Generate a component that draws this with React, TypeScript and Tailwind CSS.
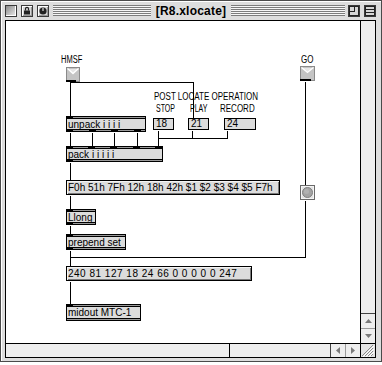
import React from "react";

type Obj = { x: number; y: number; w: number; h: number; t: string; ins: number[]; outs: number[] };

const OX = 6;
const OY = 21;

const objects: Obj[] = [
  { x: 66, y: 116, w: 80, h: 16, t: "unpack i i i i", ins: [0], outs: [0, 23, 45, 68] },
  { x: 66, y: 146, w: 97, h: 16, t: "pack i i i i i", ins: [0, 22, 44, 67, 89], outs: [0] },
  { x: 66, y: 209, w: 30, h: 16, t: "Llong", ins: [0], outs: [0] },
  { x: 66, y: 234, w: 60, h: 16, t: "prepend set", ins: [0], outs: [0] },
  { x: 66, y: 304, w: 75, h: 17, t: "midout MTC-1", ins: [0], outs: [] },
];

const numbers = [
  { x: 153, y: 118, w: 21, h: 12, t: "18" },
  { x: 188, y: 118, w: 21, h: 12, t: "21" },
  { x: 224, y: 118, w: 32, h: 12, t: "24" },
];

// cords in page coordinates: [x1,y1,x2,y2]
const cords: [number, number, number, number][] = [
  [70, 81, 70, 116],
  [70, 132, 70, 146],
  [70, 162, 70, 180],
  [70, 195, 70, 209],
  [70, 225, 70, 234],
  [70, 250, 70, 266],
  [70, 281, 70, 304],
  [70, 82, 193, 82],
  [193, 82, 193, 118],
  [92, 132, 92, 146],
  [114, 132, 114, 146],
  [137, 132, 137, 146],
  [158, 130, 158, 146],
  [192, 130, 192, 138],
  [227, 130, 227, 138],
  [158, 138, 227, 138],
  [305, 81, 305, 185],
  [305, 200, 305, 257],
  [70, 257, 305, 257],
];

function ObjBox({ o }: { o: Obj }) {
  return (
    <div
      className="absolute border border-black bg-[#dcdcdc] flex flex-col"
      style={{ left: o.x - OX, top: o.y - OY, width: o.w, height: o.h }}
    >
      <div className="relative h-[1px] shrink-0 bg-[#9a9a9a]">
        {o.ins.map((p, i) => (
          <div key={i} className="absolute top-0 h-[1px] w-[7px] bg-black" style={{ left: p - 1 }} />
        ))}
      </div>
      <div className="h-[1px] shrink-0 bg-black" />
      <div className="flex-1 min-h-0 flex items-center pl-[1px] text-[10px] leading-[11px] whitespace-nowrap overflow-hidden">
        {o.t}
      </div>
      <div className="h-[1px] shrink-0 bg-black" />
      <div className="relative h-[1px] shrink-0 bg-[#9a9a9a]">
        {o.outs.map((p, i) => (
          <div key={i} className="absolute top-0 h-[1px] w-[7px] bg-black" style={{ left: p - 1 }} />
        ))}
      </div>
    </div>
  );
}

function EnvButton({ x, y, w, h }: { x: number; y: number; w: number; h: number }) {
  return (
    <svg className="absolute" style={{ left: x - OX, top: y - OY }} width={w} height={h} shapeRendering="crispEdges">
      <rect x={0.5} y={0.5} width={w - 1} height={h - 1} fill="#c4c4c4" stroke="#8a8a8a" />
      <polygon points={`1.5,1.5 ${w / 2},${h / 2 - 1} ${w - 1.5},1.5`} fill="#e6e6e6" stroke="none" />
      <polyline
        points={`1.5,1.5 ${w / 2},${h / 2 - 1} ${w - 1.5},1.5`}
        fill="none"
        stroke="#ffffff"
        strokeWidth={1.3}
        shapeRendering="auto"
      />
      <rect x={0} y={h - 2} width={w - 4} height={2} fill="#000" />
    </svg>
  );
}

function BangButton({ x, y }: { x: number; y: number }) {
  return (
    <svg className="absolute" style={{ left: x - OX, top: y - OY }} width={15} height={15}>
      <rect x={0.5} y={0.5} width={14} height={14} fill="#e2e2e2" stroke="#6a6a6a" shapeRendering="crispEdges" />
      <rect x={1.5} y={1.5} width={12} height={12} fill="none" stroke="#f4f4f4" shapeRendering="crispEdges" />
      <circle cx={7.5} cy={7.5} r={5} fill="#a3a3a3" stroke="#808080" />
      <circle cx={6.5} cy={6.5} r={2.5} fill="#b2b2b2" />
    </svg>
  );
}

function Label({ x, y, t, s }: { x: number; y: number; t: string; s: string }) {
  return (
    <div
      className={`absolute text-[10px] leading-[11px] whitespace-nowrap origin-left ${s}`}
      style={{ left: x - OX, top: y - OY }}
    >
      {t}
    </div>
  );
}

function Stripes({ w }: { w: string }) {
  return (
    <div
      className={`${w} h-[11px] shrink-0 bg-[repeating-linear-gradient(to_bottom,#7c7c7c_0px,#7c7c7c_1px,#f6f6f6_1px,#f6f6f6_2px)]`}
    />
  );
}

function WinBox({ children, ml }: { children?: React.ReactNode; ml: string }) {
  return (
    <div className={`${ml} w-[12px] h-[12px] shrink-0 border border-[#3a3a3a] bg-[#d6d6d6] shadow-[inset_1px_1px_0_#ffffff,inset_-1px_-1px_0_#9a9a9a] flex items-center justify-center`}>
      {children}
    </div>
  );
}

export default function App() {
  return (
    <div className="w-[382px] h-[365px] bg-white font-['Liberation_Sans',Arial,sans-serif] text-black">
      <div className="w-[382px] h-[362px] border border-[#4a4a4a] bg-[#dddddd] flex flex-col shadow-[inset_1px_1px_0_#ffffff]">
        {/* title bar */}
        <div className="h-[19px] shrink-0 flex items-center">
          <div className="ml-[4px] w-[12px] h-[12px] shrink-0 border border-[#3a3a3a] bg-linear-to-br from-[#8a8a8a] to-[#f0f0f0] shadow-[inset_-1px_-1px_0_#ffffff]" />
          <WinBox ml="ml-[4px]">
            <svg width={8} height={9}>
              <path d="M2.5 4.5 V2.8 a1.5 1.5 0 0 1 3 0 V4.5" fill="none" stroke="#222" strokeWidth={1.2} />
              <rect x={1} y={4.5} width={6} height={4} fill="#222" />
            </svg>
          </WinBox>
          <WinBox ml="ml-[4px]">
            <svg width={8} height={8}>
              <circle cx={4} cy={4} r={3.6} fill="#222" />
              <rect x={3.5} y={1} width={1} height={3} fill="#fff" />
            </svg>
          </WinBox>
          <div className="ml-[4px]" />
          <Stripes w="w-[98px]" />
          <div className="w-[80px] shrink-0 text-center font-bold text-[12px] leading-[14px] tracking-[0.2px]">[R8.xlocate]</div>
          <Stripes w="w-[114px]" />
          <WinBox ml="ml-[3px]">
            <svg width={10} height={10} shapeRendering="crispEdges">
              <rect x={0.5} y={0.5} width={9} height={9} fill="none" stroke="#222" />
              <rect x={0.5} y={0.5} width={5} height={5} fill="none" stroke="#222" />
            </svg>
          </WinBox>
          <WinBox ml="ml-[4px]">
            <svg width={10} height={10} shapeRendering="crispEdges">
              <rect x={0.5} y={0.5} width={9} height={9} fill="none" stroke="#222" />
              <line x1={0} y1={3.5} x2={10} y2={3.5} stroke="#222" />
              <line x1={0} y1={6.5} x2={10} y2={6.5} stroke="#222" />
            </svg>
          </WinBox>
        </div>

        {/* content */}
        <div className="ml-[4px] mr-[5px] mb-[3px] flex-1 border border-black flex flex-col bg-white">
          <div className="flex h-[322px]">
            <div className="relative w-[354px] h-[322px] overflow-hidden bg-white">
              <svg className="absolute left-0 top-0" width={354} height={322} viewBox="6 21 354 322" shapeRendering="crispEdges">
                {cords.map(([x1, y1, x2, y2], i) => (
                  <line key={i} x1={x1 + 0.5} y1={y1 + 0.5} x2={x2 + 0.5} y2={y2 + 0.5} stroke="#000" strokeWidth={1} />
                ))}
              </svg>

              <Label x={61} y={54} t="HMSF" s="scale-x-[0.75]" />
              <Label x={301} y={54} t="GO" s="scale-x-[0.8]" />
              <Label x={154} y={91} t="POST LOCATE OPERATION" s="scale-x-[0.8]" />
              <Label x={156} y={103} t="STOP" s="scale-x-[0.7]" />
              <Label x={190} y={103} t="PLAY" s="scale-x-[0.7]" />
              <Label x={220} y={103} t="RECORD" s="scale-x-[0.8]" />

              <EnvButton x={66} y={67} w={14} h={15} />
              <EnvButton x={300} y={66} w={15} h={15} />
              <BangButton x={300} y={185} />

              {numbers.map((n, i) => (
                <div
                  key={i}
                  className="absolute border border-black bg-[#dcdcdc] pl-[2px] text-[10px] leading-[10px] whitespace-nowrap overflow-hidden"
                  style={{ left: n.x - OX, top: n.y - OY, width: n.w, height: n.h }}
                >
                  {n.t}
                </div>
              ))}

              {objects.map((o, i) => (
                <ObjBox key={i} o={o} />
              ))}

              <div
                className="absolute border border-black bg-[#dcdcdc] shadow-[inset_1px_1px_0_#f4f4f4,inset_-1px_-1px_0_#7a7a7a] flex items-center pl-[1px] text-[10px] leading-[11px] whitespace-nowrap overflow-hidden"
                style={{ left: 66 - OX, top: 180 - OY, width: 214, height: 15 }}
              >
                F0h 51h 7Fh 12h 18h 42h $1 $2 $3 $4 $5 F7h
              </div>
              <div
                className="absolute border border-black bg-[#dcdcdc] shadow-[inset_1px_1px_0_#f4f4f4,inset_-1px_-1px_0_#7a7a7a] flex items-center pl-[1px] text-[10px] leading-[11px] tracking-[0.5px] whitespace-nowrap overflow-hidden"
                style={{ left: 66 - OX, top: 266 - OY, width: 186, height: 15 }}
              >
                240 81 127 18 24 66 0 0 0 0 0 247
              </div>
            </div>

            {/* vertical scrollbar */}
            <div className="w-[15px] border-l border-black flex flex-col bg-[#eeeeee]">
              <div className="flex-1" />
              <div className="h-[15px] border-t border-[#444] flex items-center justify-center">
                <svg width={7} height={4}>
                  <polygon points="3.5,0 7,4 0,4" fill="#7a7a7a" />
                </svg>
              </div>
              <div className="h-[15px] border-t border-[#9a9a9a] flex items-center justify-center">
                <svg width={7} height={4}>
                  <polygon points="0,0 7,0 3.5,4" fill="#7a7a7a" />
                </svg>
              </div>
            </div>
          </div>

          {/* horizontal scrollbar */}
          <div className="h-[14px] border-t border-black flex bg-[#eeeeee]">
            <div className="w-[223px]" />
            <div className="w-[1px] bg-black" />
            <div className="w-[100px]" />
            <div className="w-[15px] border-l border-[#444] flex items-center justify-center">
              <svg width={4} height={7}>
                <polygon points="4,0 4,7 0,3.5" fill="#7a7a7a" />
              </svg>
            </div>
            <div className="w-[15px] border-l border-[#9a9a9a] flex items-center justify-center">
              <svg width={4} height={7}>
                <polygon points="0,0 4,3.5 0,7" fill="#7a7a7a" />
              </svg>
            </div>
            <div className="w-[15px] border-l border-black flex items-center justify-center bg-[#e4e4e4]">
              <svg width={12} height={12}>
                <line x1={3} y1={11} x2={11} y2={3} stroke="#8a8a8a" />
                <line x1={4} y1={12} x2={12} y2={4} stroke="#ffffff" />
                <line x1={6} y1={11} x2={11} y2={6} stroke="#8a8a8a" />
                <line x1={7} y1={12} x2={12} y2={7} stroke="#ffffff" />
                <line x1={9} y1={11} x2={11} y2={9} stroke="#8a8a8a" />
                <line x1={0} y1={11} x2={11} y2={0} stroke="#8a8a8a" />
                <line x1={1} y1={12} x2={12} y2={1} stroke="#ffffff" />
              </svg>
            </div>
          </div>
        </div>
      </div>
    </div>
  );
}
